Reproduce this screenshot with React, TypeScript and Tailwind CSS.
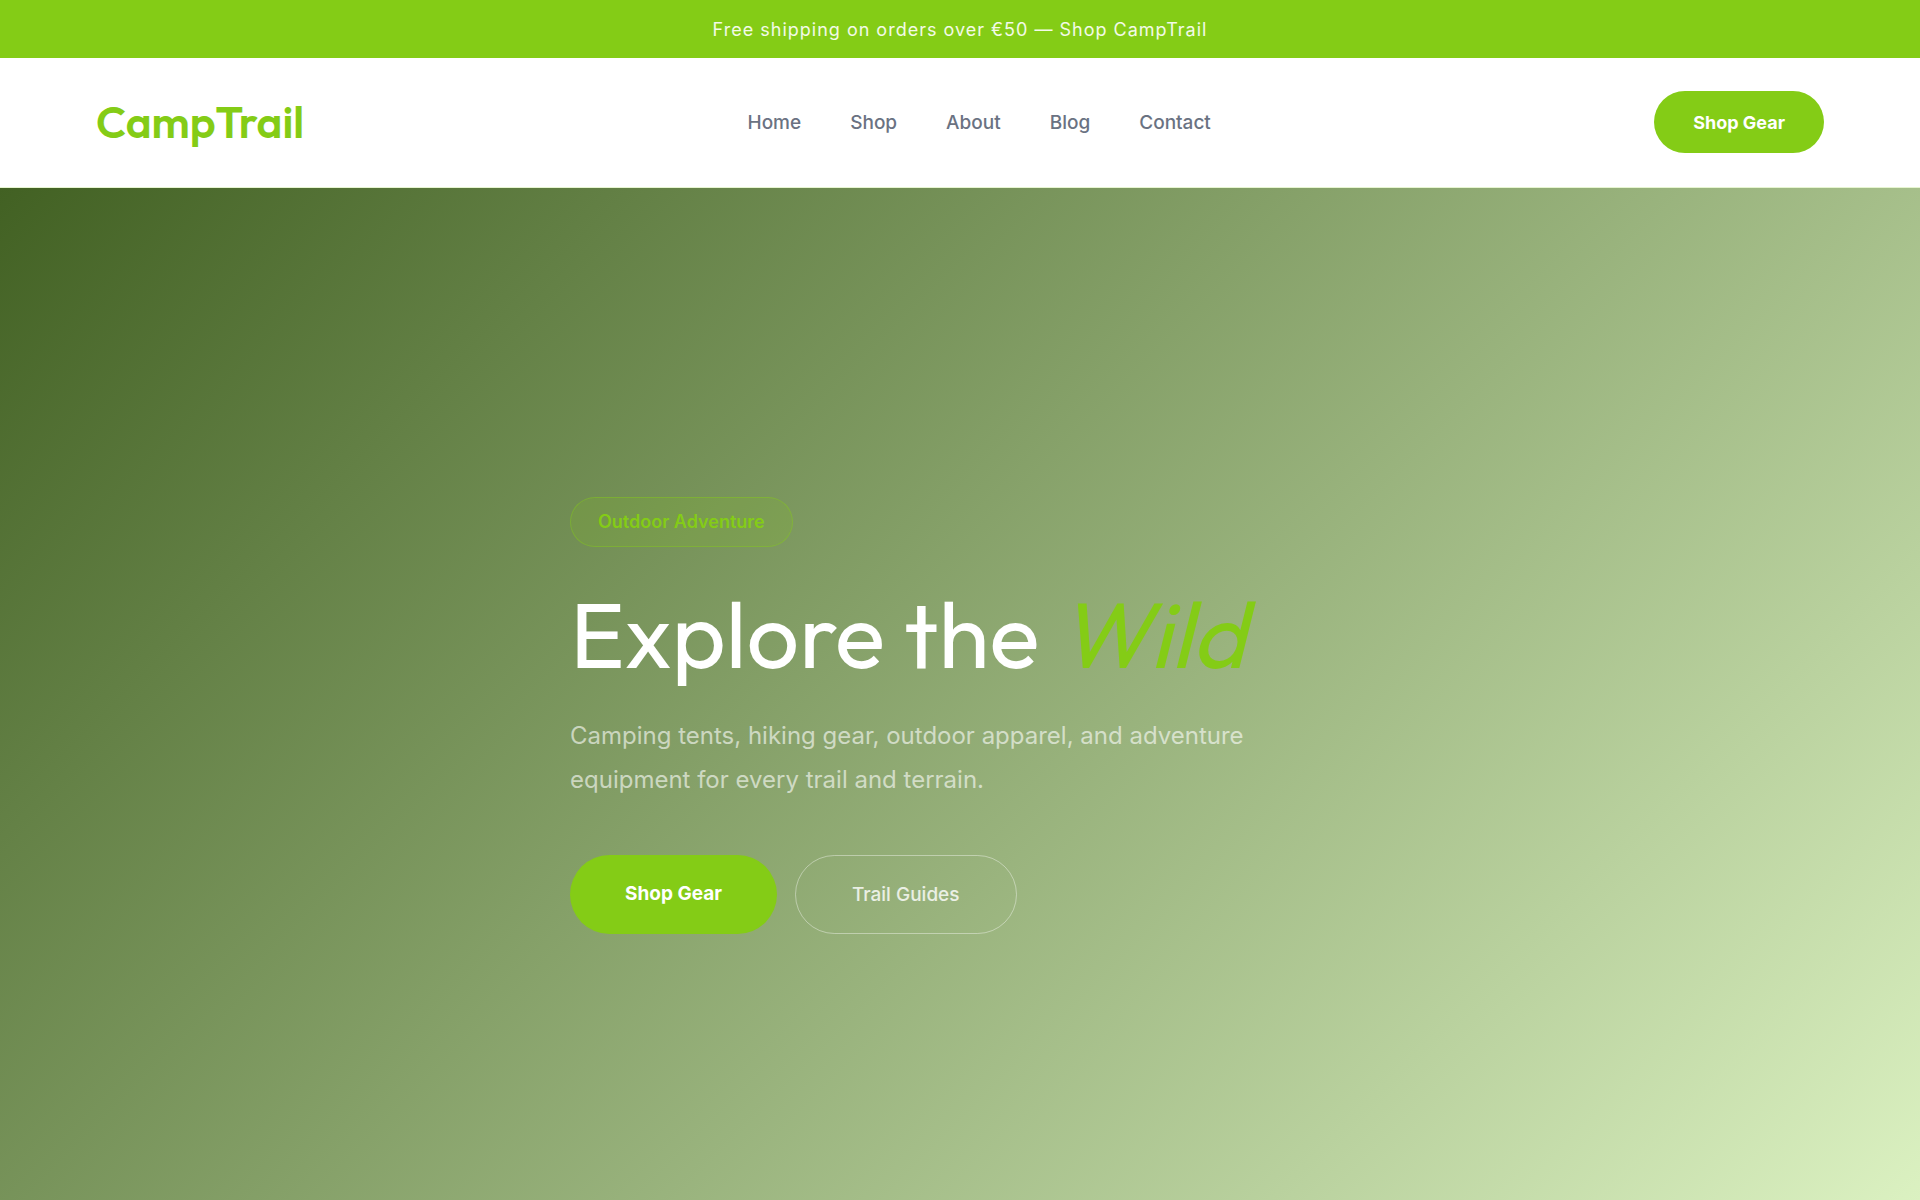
const links = ["Home", "Shop", "About", "Blog", "Contact"];

export default function App() {
  return (
    <div className="flex min-h-screen flex-col bg-white font-['Inter',sans-serif]">
      <div className="bg-[#84cc16] px-6 pt-[17px] pb-[15px] text-center text-[18px] leading-[26px] tracking-[1px] text-white/90">
        Free shipping on orders over €50 — Shop CampTrail
      </div>
      <header className="flex items-center justify-between border-b border-[#84cc16]/20 px-24 pt-[33px] pb-[34px]">
        <a href="#" className="font-['Outfit','Lato',sans-serif] text-[44px] leading-[56px] font-semibold text-[#84cc16]">
          CampTrail
        </a>
        <nav className="flex gap-[49px] pt-px text-[19px] leading-[31px] font-medium text-gray-500">
          {links.map((label) => (
            <a key={label} href="#">
              {label}
            </a>
          ))}
        </nav>
        <button className="rounded-full bg-[#84cc16] px-[39px] pt-[18px] pb-4 text-[18px] leading-[28px] font-bold text-white">
          Shop Gear
        </button>
      </header>
      <main className="flex flex-1 flex-col justify-center bg-[linear-gradient(135deg,#426123,#dbf1c1)] px-6 pt-[42px]">
        <section className="mx-auto w-full max-w-[780px]">
          <span className="inline-block rounded-full border border-[#84cc16]/40 bg-[#84cc16]/15 px-[27px] py-[9px] text-[18px] leading-[30px] font-semibold text-[#84cc16]">
            Outdoor Adventure
          </span>
          <h1 className="mt-[37px] font-['Outfit','Lato',sans-serif] text-[93px] leading-[100px] text-white">
            Explore the <em className="text-[#84cc16]">Wild</em>
          </h1>
          <p className="mt-[30px] max-w-[720px] text-[24px] leading-[44px] text-white/60">
            Camping tents, hiking gear, outdoor apparel, and adventure equipment for every trail and terrain.
          </p>
          <div className="mt-[53px] flex gap-[18px]">
            <button className="rounded-full bg-[#84cc16] px-[55px] pt-[23px] pb-6 text-[19px] leading-[30px] font-bold text-white">
              Shop Gear
            </button>
            <button className="rounded-full border border-white/40 px-[56px] pt-6 pb-[23px] text-[19px] leading-[30px] font-medium text-white/80">
              Trail Guides
            </button>
          </div>
        </section>
      </main>
    </div>
  );
}
